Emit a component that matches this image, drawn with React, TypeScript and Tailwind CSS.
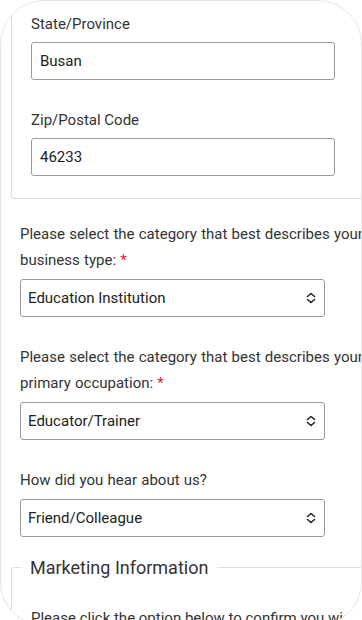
import React from 'react';

const font = { fontFamily: 'Roboto, "Liberation Sans", Arial, sans-serif' };

function Chevrons() {
  return (
    <svg width="10" height="12" viewBox="0 0 10 12" fill="none" stroke="#222" strokeWidth={1.6} strokeLinecap="round" strokeLinejoin="round">
      <polyline points="1.5,4.5 5,1.5 8.5,4.5" />
      <polyline points="1.5,7.5 5,10.5 8.5,7.5" />
    </svg>
  );
}

function TextField({ label, value, first }: { label: string; value: string; first?: boolean }) {
  return (
    <div className={first ? '' : 'mt-[27px]'}>
      <label className="block text-[15px] leading-[26px] text-[#333] mb-[5px]">{label}</label>
      <div className="w-[304px] h-[38px] border border-[#999] rounded-[3px] flex items-center pl-[8px] text-[15px] text-[#222]">
        {value}
      </div>
    </div>
  );
}

function SelectField({ label, value, required }: { label: string; value: string; required?: boolean }) {
  return (
    <div className="mt-[27px] first:mt-0">
      <p className="w-[370px] text-[15px] leading-[26px] text-[#333] mb-[6px] [word-spacing:0.5px]">
        {label}
        {required && <span className="text-[#e8192c]">&nbsp;*</span>}
      </p>
      <div className="w-[305px] h-[38px] border border-[#999] rounded-[3px] flex items-center justify-between pl-[7px] pr-[8px] text-[15px] text-[#222]">
        <span>{value}</span>
        <Chevrons />
      </div>
    </div>
  );
}

export default function App() {
  return (
    <div className="w-[362px] h-[620px] overflow-hidden bg-white" style={font}>
      <div className="w-[362px] h-[626px] rounded-[44px] border border-[#e6e6e6] overflow-hidden bg-white">
        <div className="w-[420px] -mt-px -ml-px">
          <fieldset className="ml-[11px] w-[400px] border-l border-b border-r border-[#dedede] rounded-bl-[3px] pt-[11px] pb-[22px] pl-[19px]">
            <TextField first label="State/Province" value="Busan" />
            <TextField label="Zip/Postal Code" value="46233" />
          </fieldset>

          <div className="pl-[20px] mt-[22px]">
            <SelectField
              required
              label="Please select the category that best describes your business type:"
              value="Education Institution"
            />
            <SelectField
              required
              label="Please select the category that best describes your primary occupation:"
              value="Educator/Trainer"
            />
            <SelectField label="How did you hear about us?" value="Friend/Colleague" />
          </div>

          <fieldset className="ml-[11px] mt-[17px] w-[400px] border border-[#dedede] rounded-[3px] pl-[9px]">
            <legend className="px-[9px] text-[18px] text-[#333]">Marketing Information</legend>
            <p className="pl-[10px] pt-[24px] text-[15px] leading-[26px] text-[#333] whitespace-nowrap">
              Please click the option below to confirm you wish to receive marketing emails.
            </p>
          </fieldset>
        </div>
      </div>
    </div>
  );
}
